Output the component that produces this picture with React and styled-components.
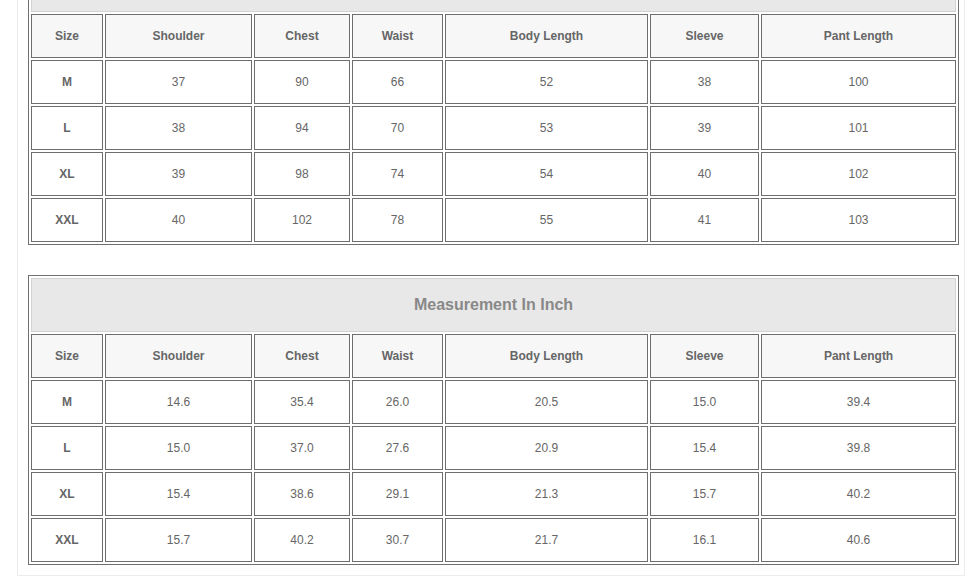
import React from "react";
import styled, { createGlobalStyle } from "styled-components";

const Global = createGlobalStyle`
  html, body { margin: 0; padding: 0; background: #ffffff; }
  body { font-family: "Liberation Sans", Arial, sans-serif; overflow: hidden; }
`;

const Page = styled.div`
  width: 978px;
  height: 581px;
  overflow: hidden;
  background: #ffffff;
`;

const Panel = styled.div`
  margin-left: 17px;
  margin-top: -45px;
  width: 948px;
  border: 1px solid #ececec;
  border-top: none;
  padding: 0 10px 10px 10px;
  box-sizing: border-box;
  display: flex;
  flex-direction: column;
  gap: 30px;
  background: #fff;
`;

const Table = styled.table`
  width: 931px;
  table-layout: fixed;
  border: 1px solid #707070;
  border-spacing: 2px;
  border-collapse: separate;
  font-size: 12px;
  color: #666;
`;

const TitleCell = styled.td`
  height: 52px;
  padding: 0;
  background: #e8e8e8;
  border: 1px solid #d2d2d2;
  text-align: center;
  vertical-align: middle;
  font-size: 16px;
  font-weight: bold;
  color: #888;
`;

const Cell = styled.td`
  height: 42px;
  padding: 0;
  border: 1px solid #6e6e6e;
  text-align: center;
  vertical-align: middle;
  background: ${(p) => (p.$head ? "#f7f7f7" : "#ffffff")};
  font-weight: ${(p) => (p.$bold ? "bold" : "normal")};
  color: #666;
`;

const widths = [72, 147, 96, 91, 203, 109, 195];
const headers = ["Size", "Shoulder", "Chest", "Waist", "Body Length", "Sleeve", "Pant Length"];

const cmRows = [
  ["M", "37", "90", "66", "52", "38", "100"],
  ["L", "38", "94", "70", "53", "39", "101"],
  ["XL", "39", "98", "74", "54", "40", "102"],
  ["XXL", "40", "102", "78", "55", "41", "103"],
];

const inchRows = [
  ["M", "14.6", "35.4", "26.0", "20.5", "15.0", "39.4"],
  ["L", "15.0", "37.0", "27.6", "20.9", "15.4", "39.8"],
  ["XL", "15.4", "38.6", "29.1", "21.3", "15.7", "40.2"],
  ["XXL", "15.7", "40.2", "30.7", "21.7", "16.1", "40.6"],
];

function SizeTable({ title, rows }) {
  return (
    <Table>
      <colgroup>
        {widths.map((w, i) => (
          <col key={i} style={{ width: w }} />
        ))}
      </colgroup>
      <tbody>
        <tr>
          <TitleCell colSpan={7}>{title}</TitleCell>
        </tr>
        <tr>
          {headers.map((h) => (
            <Cell key={h} $head $bold>
              {h}
            </Cell>
          ))}
        </tr>
        {rows.map((r) => (
          <tr key={r[0]}>
            {r.map((v, i) => (
              <Cell key={i} $bold={i === 0}>
                {v}
              </Cell>
            ))}
          </tr>
        ))}
      </tbody>
    </Table>
  );
}

export default function App() {
  return (
    <Page>
      <Global />
      <Panel>
        <SizeTable title="Measurement In CM" rows={cmRows} />
        <SizeTable title="Measurement In Inch" rows={inchRows} />
      </Panel>
    </Page>
  );
}
